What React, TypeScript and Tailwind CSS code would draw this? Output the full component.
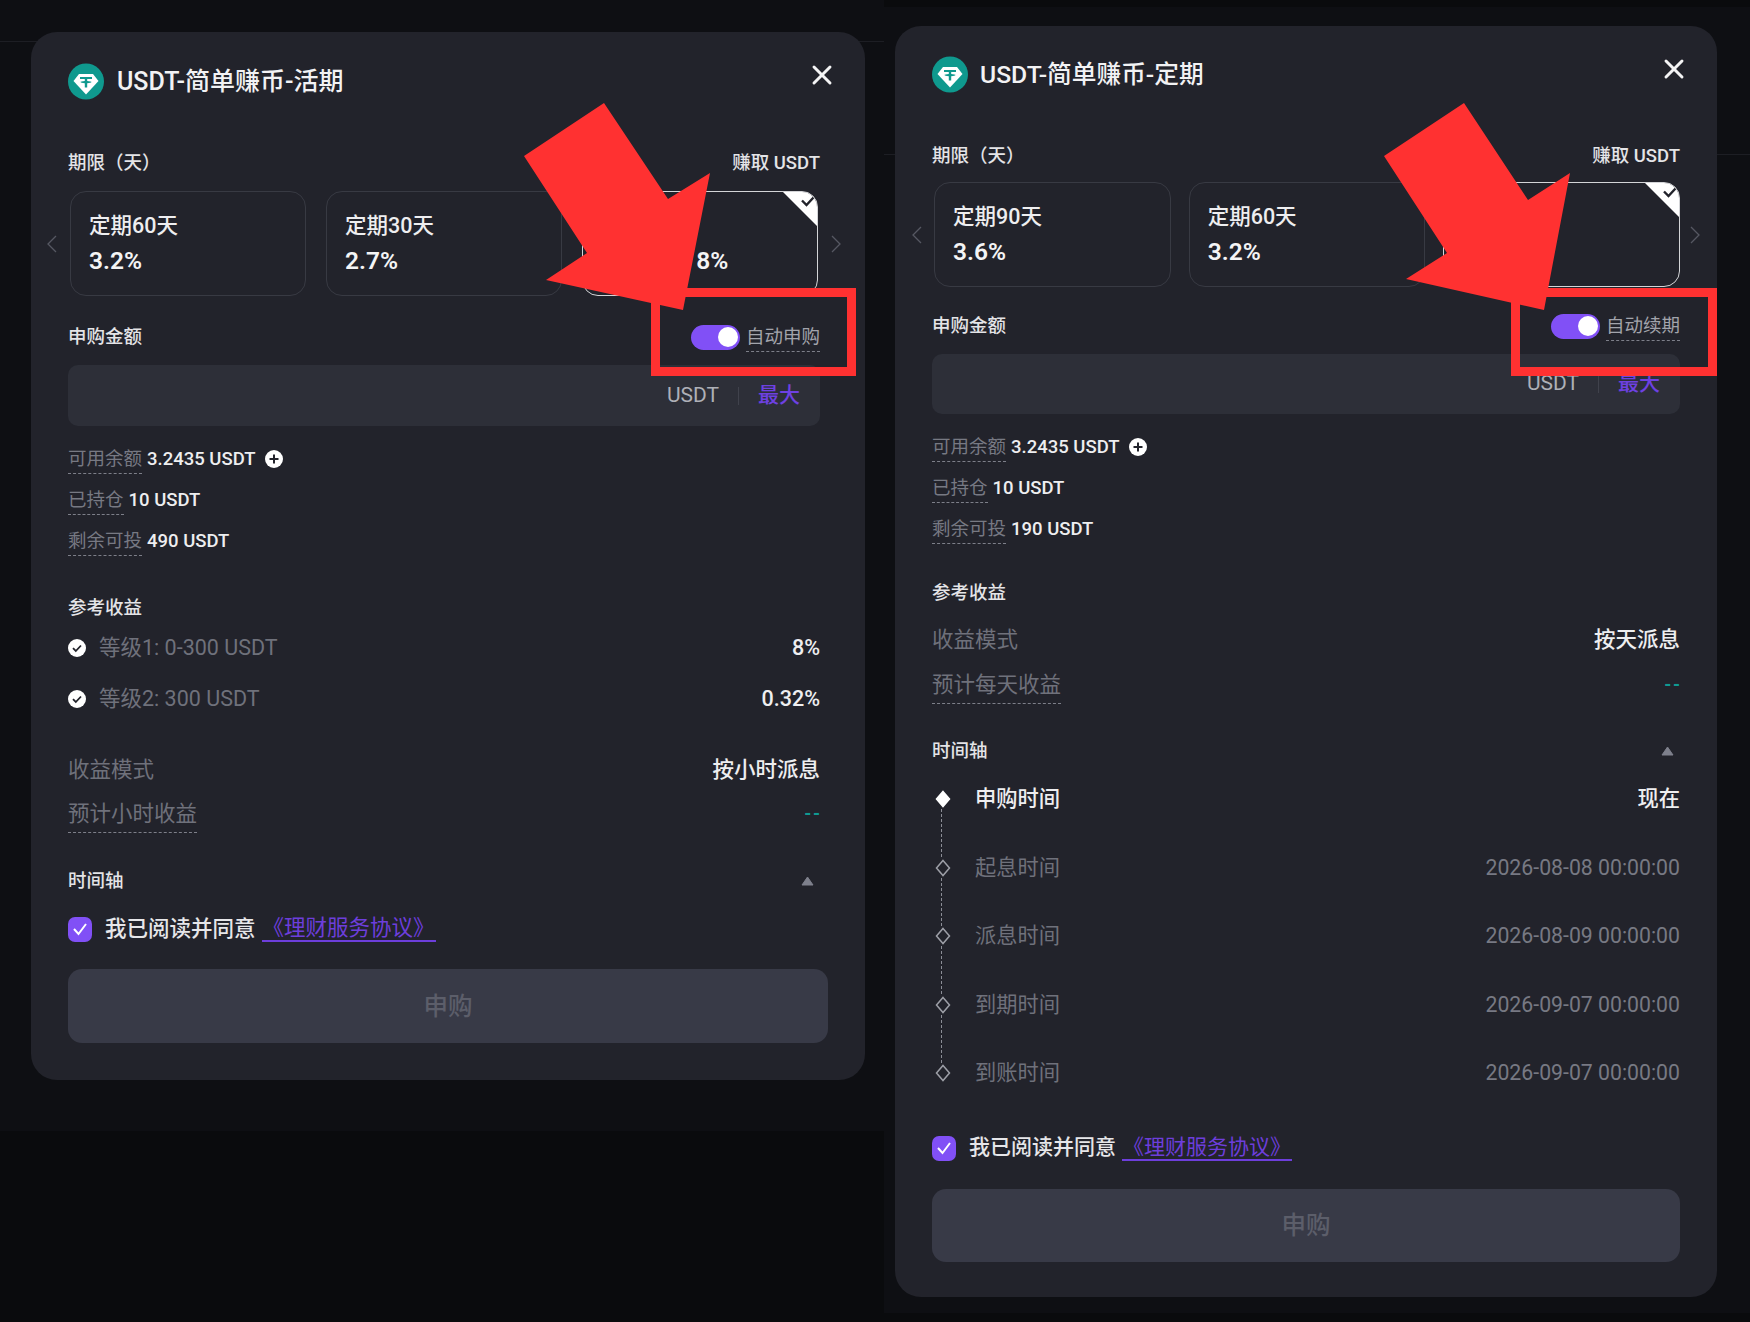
import { ReactNode } from "react";
import { X } from "lucide-react";

const Dashed = ({ children, large }: { children: ReactNode; large?: boolean }) => (
  <span
    className={
      large
        ? "inline-block mt-[5px] pb-[4px] leading-[28px] border-b border-dashed border-[#7d7f89]"
        : "inline-block mt-[3px] pb-[2px] leading-[24px] border-b border-dashed border-[#7d7f89]"
    }
  >
    {children}
  </span>
);

const Logo = () => (
  <svg width="36" height="37" viewBox="0 0 36 37" className="shrink-0">
    <circle cx="18" cy="18.5" r="18" fill="#0f998e" />
    <path d="M11 11h14l5.500 7L18 31.500 5.500 18z" fill="#fff" />
    <path d="M12 14h12v2h-4.800v2c2.500.1 4.400.6 4.400 1.100s-1.900 1-4.400 1.100v4.300h-2.400v-4.300c-2.500-.1-4.400-.6-4.400-1.100s1.900-1 4.400-1.100v-2H12z" fill="#0f998e" />
  </svg>
);

const Chevron = ({ right }: { right?: boolean }) => (
  <svg width="10" height="18" viewBox="0 0 10 18" fill="none" className="shrink-0">
    <path d={right ? "M1 1l8 8-8 8" : "M9 1L1 9l8 8"} stroke="#565862" strokeWidth="1.300" />
  </svg>
);

const Card = ({ label, value, selected }: { label: string; value: string; selected?: boolean }) => (
  <div
    className={
      selected
        ? "relative flex-1 h-[105px] rounded-[16px] overflow-hidden border border-[#d4d5d8] pl-[18px] pt-[20px]"
        : "relative flex-1 h-[105px] rounded-[16px] overflow-hidden border border-[#383a43] pl-[18px] pt-[20px]"
    }
  >
    <div className="text-[21.500px] leading-[28px] font-medium text-[#eeeef0]">{label}</div>
    <div className="mt-[7px] text-[24.500px] leading-[28px] font-semibold text-[#f4f4f5]">{value}</div>
    {selected && (
      <svg width="36" height="36" viewBox="0 0 36 36" className="absolute top-[-1px] right-[-1px]">
        <path d="M0 0h36v36z" fill="#fff" />
        <path d="M20 9.500l4.500 4.500 7-7.500" fill="none" stroke="#22232b" strokeWidth="2.400" />
      </svg>
    )}
  </div>
);

const Toggle = () => (
  <div className="flex items-center justify-end w-[49px] h-[25px] rounded-full bg-[#8150f6] pr-[2px] mr-[6px]">
    <div className="w-[20px] h-[20px] rounded-full bg-white" />
  </div>
);

const InfoRow = ({ label, value, plus, className }: { label: string; value: string; plus?: boolean; className: string }) => (
  <div className={`flex items-center h-[24px] text-[18.500px] leading-[24px] ${className}`}>
    <Dashed>
      <span className="text-[#777983]">{label}</span>
    </Dashed>
    <span className="ml-[5px] font-medium text-[#eeeef0]">{value}</span>
    {plus && (
      <svg width="18" height="18" viewBox="0 0 18 18" className="ml-[9px]">
        <circle cx="9" cy="9" r="9" fill="#fff" />
        <path d="M9 4.500v9M4.500 9h9" stroke="#22232b" strokeWidth="2" />
      </svg>
    )}
  </div>
);

const Tier = ({ label, value, className }: { label: string; value: string; className: string }) => (
  <div className={`flex items-center justify-between h-[28px] text-[21.500px] ${className}`}>
    <div className="flex items-center">
      <svg width="18" height="18" viewBox="0 0 18 18" className="mr-[13px]">
        <circle cx="9" cy="9" r="9" fill="#fff" />
        <path d="M5 9.200l2.800 2.800L13 6.500" fill="none" stroke="#22232b" strokeWidth="1.800" />
      </svg>
      <span className="text-[#6f717b]">{label}</span>
    </div>
    <span className="font-medium text-[#eeeef0]">{value}</span>
  </div>
);

const UpCaret = () => (
  <svg width="13" height="10" viewBox="0 0 13 10" className="mr-[6px]">
    <path d="M6.500 1L12 9H1z" fill="#7e808c" stroke="#7e808c" strokeLinejoin="round" />
  </svg>
);

const Agree = ({ className }: { className: string }) => (
  <div className={`flex items-center h-[26px] ${className}`}>
    <div className="flex items-center justify-center w-[24px] h-[25px] rounded-[7px] bg-[#8150f6] mr-[13px]">
      <svg width="16" height="14" viewBox="0 0 16 14" fill="none">
        <path d="M2 7l4.500 5L14 2" stroke="#fff" strokeWidth="2" />
      </svg>
    </div>
    <span className="font-medium text-[#e6e6e9]">我已阅读并同意</span>
    <span className="ml-[6px] px-[1px] text-[#6d3edb] border-b-2 border-[#6d3edb] leading-[24px]">《理财服务协议》</span>
  </div>
);

const AmountInput = ({ className }: { className: string }) => (
  <div className={`flex items-center justify-end rounded-[10px] bg-[#2d2f38] pr-[20px] ${className}`}>
    <span className="text-[21px] text-[#aeb0b7]">USDT</span>
    <span className="w-px h-[18px] bg-[#40424c] mx-[19px]" />
    <span className="text-[21px] font-medium text-[#6e41e2]">最大</span>
  </div>
);

const SubmitBtn = ({ className }: { className: string }) => (
  <div className={`flex items-center justify-center rounded-[14px] bg-[#383a47] pt-[2px] text-[24.500px] font-medium text-[#5c5e6a] ${className}`}>
    申购
  </div>
);

const TimelineRow = ({ label, value, active, last }: { label: string; value: string; active?: boolean; last?: boolean }) => (
  <div className="relative flex items-center justify-between h-[28px] text-[21.250px]">
    <div className="flex items-center">
      <svg width="18" height="18" viewBox="0 0 18 18" className="ml-[2px] mr-[23px]">
        <path d="M9 1.500l6.500 7.500L9 16.500 2.500 9z" fill={active ? "#fff" : "none"} stroke={active ? "#fff" : "#9d9fa7"} strokeWidth="1.500" />
      </svg>
      <span className={active ? "font-medium text-[#eeeef0]" : "text-[#6f717b]"}>{label}</span>
    </div>
    <span className={active ? "font-medium text-[#eeeef0]" : "text-[#777983]"}>{value}</span>
    {!last && <div className="absolute left-[9px] top-[24px] h-[48px] border-l border-dashed border-[#8b8d96]" />}
  </div>
);

const Estimate = ({ label, className }: { label: string; className: string }) => (
  <div className={`flex items-center justify-between h-[28px] text-[21.500px] leading-[28px] ${className}`}>
    <Dashed large>
      <span className="text-[#6f717b]">{label}</span>
    </Dashed>
    <span className="text-[18px] font-bold tracking-[1.500px] -mr-[1.500px] text-[#0f9a92]">--</span>
  </div>
);

const LeftPanel = () => (
  <div className="relative w-[834px] h-[1048px] rounded-[26px] bg-[#22232b] pl-[37px] pr-[45px] pt-[30px]">
    <div className="flex items-start justify-between h-[37px]">
      <div className="flex items-center">
        <Logo />
        <span className="ml-[13px] text-[25px] leading-[39px] font-medium text-[#f2f2f4]">USDT-简单赚币-活期</span>
      </div>
      <X size={32} strokeWidth={2.200} color="#f4f4f5" className="mt-[-3px] mr-[-18px]" />
    </div>
    <div className="mt-[52px] flex justify-between h-[24px] text-[18.500px] leading-[24px] font-medium text-[#e4e4e7]">
      <span>期限（天）</span>
      <span>赚取 USDT</span>
    </div>
    <div className="mt-[16px] -ml-[21px] flex items-center w-[794px]">
      <Chevron />
      <div className="ml-[13px] mr-[13px] flex flex-1 gap-[20px]">
        <Card label="定期60天" value="3.2%" />
        <Card label="定期30天" value="2.7%" />
        <Card label="活期" value="0.32% ~ 8%" selected />
      </div>
      <Chevron right />
    </div>
    <div className="mt-[27px] flex items-center justify-between h-[28px] text-[18.500px] leading-[28px]">
      <span className="font-medium text-[#e4e4e7]">申购金额</span>
      <div className="flex items-center">
        <Toggle />
        <Dashed>
          <span className="text-[#a2a4ac]">自动申购</span>
        </Dashed>
      </div>
    </div>
    <AmountInput className="mt-[14px] h-[61px]" />
    <InfoRow className="mt-[21px]" label="可用余额" value="3.2435 USDT" plus />
    <InfoRow className="mt-[17px]" label="已持仓" value="10 USDT" />
    <InfoRow className="mt-[17px]" label="剩余可投" value="490 USDT" />
    <div className="mt-[43px] h-[24px] text-[18.500px] leading-[24px] font-medium text-[#e4e4e7]">参考收益</div>
    <Tier className="mt-[14px]" label="等级1: 0-300 USDT" value="8%" />
    <Tier className="mt-[23px]" label="等级2: 300 USDT" value="0.32%" />
    <div className="mt-[43px] flex items-center justify-between h-[28px] text-[21.500px]">
      <span className="text-[#6f717b]">收益模式</span>
      <span className="font-medium text-[#eeeef0]">按小时派息</span>
    </div>
    <Estimate className="mt-[16px]" label="预计小时收益" />
    <div className="mt-[41px] flex items-center justify-between h-[24px] text-[18.500px] leading-[24px] font-medium text-[#e4e4e7]">
      <span>时间轴</span>
      <UpCaret />
    </div>
    <Agree className="mt-[23px] text-[21.500px]" />
    <SubmitBtn className="mt-[27px] h-[74px] w-[760px]" />
  </div>
);

const RightPanel = () => (
  <div className="relative w-[822px] h-[1271px] rounded-[26px] bg-[#22232b] px-[37px] pt-[30px]">
    <div className="flex items-start justify-between h-[37px]">
      <div className="flex items-center">
        <Logo />
        <span className="ml-[12px] text-[24.700px] leading-[37px] font-medium text-[#f2f2f4]">USDT-简单赚币-定期</span>
      </div>
      <X size={32} strokeWidth={2.200} color="#f4f4f5" className="mt-[-3px] mr-[-10px]" />
    </div>
    <div className="mt-[51px] flex justify-between h-[24px] text-[18.500px] leading-[24px] font-medium text-[#e4e4e7]">
      <span>期限（天）</span>
      <span>赚取 USDT</span>
    </div>
    <div className="mt-[14px] -ml-[20px] flex items-center w-[788px]">
      <Chevron />
      <div className="ml-[12px] mr-[10px] flex flex-1 gap-[18px]">
        <Card label="定期90天" value="3.6%" />
        <Card label="定期60天" value="3.2%" />
        <Card label="定期30天" value="2.7%" selected />
      </div>
      <Chevron right />
    </div>
    <div className="mt-[25px] flex items-center justify-between h-[28px] text-[18.500px] leading-[28px]">
      <span className="font-medium text-[#e4e4e7]">申购金额</span>
      <div className="flex items-center">
        <Toggle />
        <Dashed>
          <span className="text-[#a2a4ac]">自动续期</span>
        </Dashed>
      </div>
    </div>
    <AmountInput className="mt-[14px] h-[60px]" />
    <InfoRow className="mt-[21px]" label="可用余额" value="3.2435 USDT" plus />
    <InfoRow className="mt-[17px]" label="已持仓" value="10 USDT" />
    <InfoRow className="mt-[17px]" label="剩余可投" value="190 USDT" />
    <div className="mt-[40px] h-[24px] text-[18.500px] leading-[24px] font-medium text-[#e4e4e7]">参考收益</div>
    <div className="mt-[21px] flex items-center justify-between h-[28px] text-[21.500px]">
      <span className="text-[#6f717b]">收益模式</span>
      <span className="font-medium text-[#eeeef0]">按天派息</span>
    </div>
    <Estimate className="mt-[17px]" label="预计每天收益" />
    <div className="mt-[40px] flex items-center justify-between h-[24px] text-[18.500px] leading-[24px] font-medium text-[#e4e4e7]">
      <span>时间轴</span>
      <UpCaret />
    </div>
    <div className="mt-[22px] flex flex-col gap-[40.500px]">
      <TimelineRow label="申购时间" value="现在" active />
      <TimelineRow label="起息时间" value="2026-08-08 00:00:00" />
      <TimelineRow label="派息时间" value="2026-08-09 00:00:00" />
      <TimelineRow label="到期时间" value="2026-09-07 00:00:00" />
      <TimelineRow label="到账时间" value="2026-09-07 00:00:00" last />
    </div>
    <Agree className="mt-[48px] text-[21px]" />
    <SubmitBtn className="mt-[28px] h-[73px]" />
  </div>
);

export default function App() {
  return (
    <div className="relative flex w-[1750px] h-[1322px] overflow-hidden bg-[#0a0b0d] font-[Roboto,'Noto_Sans_CJK_SC',sans-serif]">
      <div className="relative w-[884px] h-[1131px] bg-[#0e0f13] pl-[31px] pt-[32px]">
        <div className="absolute left-0 right-0 top-[41px] border-t border-[#1d1e24]" />
        <LeftPanel />
      </div>
      <div className="relative w-[866px] h-[1306px] mt-[7px] bg-[#0e0f13] pl-[11px] pt-[19px]">
        <div className="absolute left-0 right-0 top-[147px] border-t border-[#1d1e24]" />
        <RightPanel />
      </div>

      {/* annotations drawn over the screenshots */}
      <svg width="1750" height="1322" className="absolute inset-0 pointer-events-none">
        <polygon points="604,103 668,199 710,173 683,310 546,280 587,253 524,156" fill="#ff3131" />
        <polygon points="1464,103 1528,200 1570,173 1544,310 1406,279 1447,253 1384,156" fill="#ff3131" />
      </svg>
      <div className="absolute left-[651px] top-[288px] w-[205px] h-[88px] border-[9px] border-[#ff3131]" />
      <div className="absolute left-[1511px] top-[288px] w-[206px] h-[88px] border-[9px] border-[#ff3131]" />
    </div>
  );
}
